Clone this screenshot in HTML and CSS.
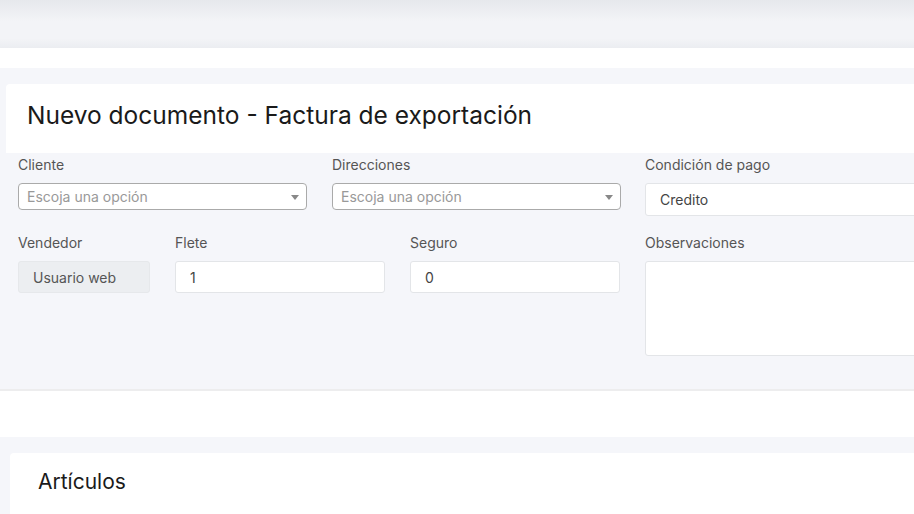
FILE: index.html
```html
<!DOCTYPE html>
<html lang="es">
<head>
  <meta charset="UTF-8" />
  <title>Nuevo documento - Factura de exportación</title>
  <meta name="viewport" content="width=device-width, initial-scale=1.0">
  <link rel="stylesheet" href="styles.css">
</head>
<body>

  <header class="topbar"></header>

  <section class="panel">
    <div class="card-head">
      <h2>Nuevo documento - Factura de exportación</h2>
    </div>

    <form class="doc-form">
      <div class="row row-top">
        <div class="field">
          <label>Cliente</label>
          <div class="select">
            <span>Escoja una opción</span>
            <i class="caret"></i>
          </div>
        </div>
        <div class="field">
          <label>Direcciones</label>
          <div class="select">
            <span>Escoja una opción</span>
            <i class="caret"></i>
          </div>
        </div>
        <div class="field">
          <label>Condición de pago</label>
          <div class="input tall">Credito</div>
        </div>
      </div>

      <div class="row row-bottom">
        <div class="field">
          <label>Vendedor</label>
          <div class="input readonly">Usuario web</div>
        </div>
        <div class="field">
          <label>Flete</label>
          <div class="input">1</div>
        </div>
        <div class="field">
          <label>Seguro</label>
          <div class="input">0</div>
        </div>
        <div class="field">
          <label>Observaciones</label>
          <div class="textarea"></div>
        </div>
      </div>
    </form>
  </section>

  <section class="panel panel-items">
    <div class="card-head items-head">
      <h3>Artículos</h3>
    </div>
  </section>

</body>
</html>
```

FILE: styles.css
```css
body {
  margin: 0;
  padding: 0;
  font-family: Inter, "Noto Sans", sans-serif;
  background: #fff;
  color: #333;
  overflow: hidden;
  width: 914px;
}

.topbar {
  height: 48px;
  background: linear-gradient(#e6e8ec, #f3f4f7 45%, #f3f4f7 80%, #ebedf1);
}

.panel {
  margin-top: 20px;
  background: #f5f6fa;
  padding: 16px 0 33px 0;
  border-bottom: 2px solid #ededee;
}

.card-head {
  margin-left: 6px;
  width: 940px;
  height: 69px;
  background: #fff;
  border-radius: 4px 0 0 0;
  display: flex;
  align-items: center;
  padding-left: 21px;
}

.card-head h2 {
  margin: 0 0 8px 0;
  font-size: 24.5px;
  font-weight: 400;
  color: #1a1a1a;
}

.doc-form {
  padding-left: 18px;
  font-size: 14px;
}

.row {
  display: flex;
  gap: 25px;
  align-items: flex-start;
}

.field {
  flex-shrink: 0;
}

.row-top {
  margin-top: 2px;
}

.row-top .field {
  width: 289px;
}

.row-top .field:nth-child(3) {
  margin-left: -1px;
}

.row-bottom {
  margin-top: 17px;
}

.row-bottom .field:nth-child(1) { width: 132px; }
.row-bottom .field:nth-child(2) { width: 210px; }
.row-bottom .field:nth-child(3) { width: 210px; }
.row-bottom .field:nth-child(4) { width: 289px; }

.field label {
  display: block;
  line-height: 20px;
  margin-bottom: 8px;
  color: #555;
}

.select {
  height: 27px;
  box-sizing: border-box;
  border: 1px solid #aaa;
  border-radius: 4px;
  background: #fff;
  display: flex;
  align-items: center;
  padding: 0 8px;
  color: #999;
  position: relative;
}

.caret {
  position: absolute;
  right: 7px;
  top: 11px;
  border-left: 4px solid transparent;
  border-right: 4px solid transparent;
  border-top: 5px solid #888;
}

.input {
  height: 32px;
  box-sizing: border-box;
  border: 1px solid #e3e5e8;
  border-radius: 3px;
  background: #fff;
  display: flex;
  align-items: center;
  padding: 0 14px;
  color: #444;
}

.input.tall {
  height: 33px;
}

.input.readonly {
  background: #eceef1;
  border-color: #e6e8eb;
  color: #555;
}

.textarea {
  height: 95px;
  box-sizing: border-box;
  border: 1px solid #e3e5e8;
  border-radius: 3px;
  background: #fff;
}

.panel-items {
  margin-top: 46px;
  border-bottom: none;
  padding: 16px 0 0 0;
  height: 62px;
}

.items-head {
  margin-left: 10px;
  height: 62px;
  align-items: flex-start;
  padding-left: 28px;
}

.items-head h3 {
  margin: 16px 0 0 0;
  font-size: 21px;
  font-weight: 400;
  color: #1a1a1a;
}
```
